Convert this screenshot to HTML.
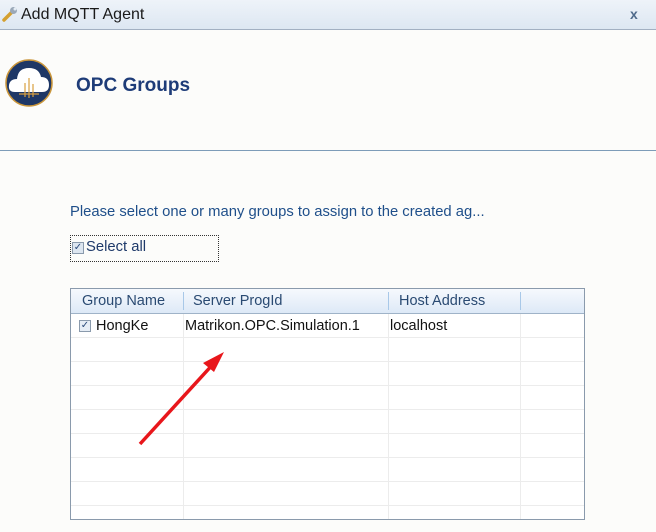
<!DOCTYPE html>
<html><head><style>
body{margin:0;width:656px;height:532px;background:#fcfcfa;font-family:"Liberation Sans",sans-serif;position:relative;overflow:hidden}
.t{position:absolute;white-space:nowrap}
</style></head><body>
<div style="position:absolute;left:0;top:0;width:656px;height:29px;background:linear-gradient(#eef3f9,#dde7f2);border-bottom:1px solid #a2b0c2"></div>
<svg style="position:absolute;left:1px;top:5px" width="18" height="18" viewBox="0 0 18 18"><path d="M3 15 L11 7" stroke="#d4a030" stroke-width="3.5" stroke-linecap="round"/><circle cx="12.5" cy="5.5" r="3.5" fill="#9aa8b8"/><circle cx="14" cy="4" r="1.5" fill="#e4ecf4"/></svg>
<div class="t" style="left:21px;top:6px;font-size:16px;color:#1a1a1a">Add MQTT Agent</div>
<div class="t" style="left:630px;top:6px;font-size:14px;color:#4f6a8a;font-weight:bold">x</div>
<svg style="position:absolute;left:5px;top:59px" width="48" height="48" viewBox="0 0 48 48"><circle cx="24" cy="24" r="23" fill="#1e3766" stroke="#c9953a" stroke-width="1.5"/><path d="M10 33 Q3 33 4 26 Q5 20 12 20 Q13 9 24 9 Q34 9 36 18 Q44 18 44 26 Q44 33 37 33 Z" fill="#fff"/><path d="M20 38V24M24 39V19M28 38V25M14 35H34" stroke="#d9a040" stroke-width="1.2" fill="none"/></svg>
<div class="t" style="left:76px;top:75px;font-size:19px;font-weight:bold;color:#1e3c78">OPC Groups</div>
<div style="position:absolute;left:0;top:150px;width:656px;height:1px;background:#7d9cb8"></div>
<div class="t" style="left:70px;top:204px;font-size:14.8px;color:#1f4f8a">Please select one or many groups to assign to the created ag...</div>
<div style="position:absolute;left:70px;top:235px;width:147px;height:25px;border:1px dotted #333"></div>
<div style="position:absolute;left:72px;top:242px;width:10px;height:10px;border:1px solid #8a9aac;background:#dde6f0;font-size:10px;line-height:10px;color:#2a4a7a;text-align:center">✓</div>
<div class="t" style="left:86px;top:239px;font-size:14.8px;color:#1f3a6a">Select all</div>
<div style="position:absolute;left:70px;top:288px;width:513px;height:230px;border:1px solid #8a9aac;background:#fff;overflow:hidden">
<div style="position:absolute;left:0;top:0;width:513px;height:24px;background:linear-gradient(#f6f9fd,#dde9f7);border-bottom:1px solid #9fb3c8"></div>
<div style="position:absolute;left:112px;top:3px;width:1px;height:18px;background:#a8c8e8"></div>
<div style="position:absolute;left:317px;top:3px;width:1px;height:18px;background:#a8c8e8"></div>
<div style="position:absolute;left:449px;top:3px;width:1px;height:18px;background:#a8c8e8"></div>
<div class="t" style="left:11px;top:4px;font-size:14.5px;color:#2a4a72">Group Name</div>
<div class="t" style="left:122px;top:4px;font-size:14.5px;color:#2a4a72">Server ProgId</div>
<div class="t" style="left:328px;top:4px;font-size:14.5px;color:#2a4a72">Host Address</div>
<div style="position:absolute;left:112px;top:25px;width:1px;height:210px;background:#ececec"></div>
<div style="position:absolute;left:317px;top:25px;width:1px;height:210px;background:#ececec"></div>
<div style="position:absolute;left:449px;top:25px;width:1px;height:210px;background:#ececec"></div>
<div style="position:absolute;left:0;top:48px;width:513px;height:1px;background:#ececec;box-shadow:0 24px #ececec,0 48px #ececec,0 72px #ececec,0 96px #ececec,0 120px #ececec,0 144px #ececec,0 168px #ececec"></div>
<div style="position:absolute;left:8px;top:31px;width:10px;height:10px;border:1px solid #8a9aac;background:#e6edf5;font-size:10px;line-height:10px;color:#2a4a7a;text-align:center">✓</div>
<div class="t" style="left:25px;top:29px;font-size:14.5px;color:#111">HongKe</div>
<div class="t" style="left:114px;top:29px;font-size:14.5px;color:#111">Matrikon.OPC.Simulation.1</div>
<div class="t" style="left:319px;top:29px;font-size:14.5px;color:#111">localhost</div>
</div>
<svg style="position:absolute;left:0;top:0" width="656" height="532"><path d="M140 444 L215 362" stroke="#e8161b" stroke-width="3.5"/><path d="M224 352 L203 363 L214 372 Z" fill="#e8161b"/></svg>
</body></html>
